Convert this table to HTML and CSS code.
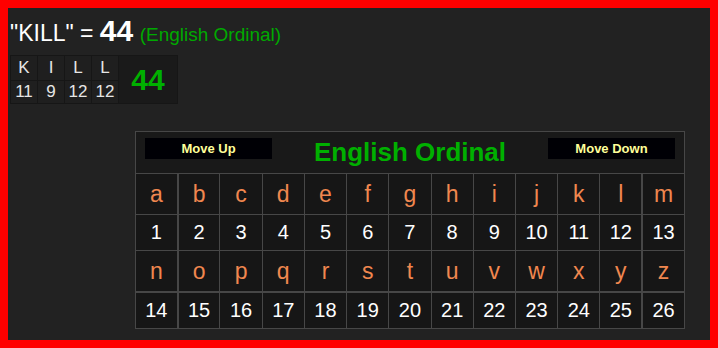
FILE: index.html
```html
<!doctype html>
<html lang="en">
  <head>
    <meta charset="UTF-8" />
    <meta name="viewport" content="width=device-width, initial-scale=1.0" />
    <title>KILL - English Ordinal</title>
    <link rel="stylesheet" href="styles.css">
  </head>
  <body>
    <div class="frame">
      <div class="result">
        "KILL" = <b class="total">44</b> <span class="cipher">(English Ordinal)</span>
      </div>

      <table class="breakdown">
        <tr>
          <td>K</td><td>I</td><td>L</td><td>L</td>
          <td class="sum" rowspan="2">44</td>
        </tr>
        <tr class="nums">
          <td>11</td><td>9</td><td>12</td><td>12</td>
        </tr>
      </table>

      <table class="chart">
        <tr class="head">
          <td colspan="13">
            <div class="head-row">
              <button class="move">Move Up</button>
              <span class="chart-title">English Ordinal</span>
              <button class="move">Move Down</button>
            </div>
          </td>
        </tr>
        <tr class="letters" id="row1"></tr>
        <tr class="values" id="row2"></tr>
        <tr class="letters" id="row3"></tr>
        <tr class="values" id="row4"></tr>
      </table>
    </div>

    <script>
      // fill the a-z chart, two rows of 13 letters
      var abc = "abcdefghijklmnopqrstuvwxyz";
      function fill(letterRow, valueRow, from) {
        var l = document.getElementById(letterRow);
        var v = document.getElementById(valueRow);
        for (var i = from; i < from + 13; i++) {
          var a = document.createElement("td");
          a.textContent = abc[i];
          var n = document.createElement("td");
          n.textContent = i + 1;
          if (i % 13 === 0) {
            a.className = n.className = "first";
          }
          if (i % 13 === 12) {
            a.className = n.className = "last";
          }
          l.appendChild(a);
          v.appendChild(n);
        }
      }
      fill("row1", "row2", 0);
      fill("row3", "row4", 13);
    </script>
  </body>
</html>
```

FILE: styles.css
```css
html,
body {
  margin: 0;
  padding: 0;
}

body {
  font-family: "Liberation Sans", Arial, sans-serif;
  color: #fff;
  background: #222;
}

.frame {
  box-sizing: border-box;
  height: 348px;
  border: 8px solid #ff0000;
  background: #222;
  padding: 0 2px;
  overflow: hidden;
}

.result {
  padding-top: 10px;
  height: 27px;
  font-size: 23px;
  line-height: 26px;
  white-space: nowrap;
}

.result .total {
  font-size: 30px;
}

.result .cipher {
  color: #00a900;
  font-size: 19px;
}

/* letter by letter breakdown */
.breakdown {
  margin-top: 10px;
  width: 168px;
  border-spacing: 1px;
  background: #161616;
  border-collapse: separate;
}

.breakdown td {
  background: #1f1f1f;
  color: #e6e6e6;
  font-size: 17px;
  text-align: center;
  width: 26px;
  height: 24px;
  padding: 0;
}

.breakdown .nums td {
  height: 22px;
}

.breakdown td.sum {
  background: #1a1a1a;
  color: #00b000;
  font-size: 30px;
  font-weight: bold;
  width: auto;
}

/* cipher chart */
.chart {
  margin: 27px 0 0 125px;
  width: 550px;
  border-collapse: collapse;
  background: #161616;
  table-layout: fixed;
}

.chart td {
  border: 1px solid #474747;
  text-align: center;
  padding: 0;
}

.chart .head td {
  background: #191919;
  height: 41px;
}

.head-row {
  display: flex;
  justify-content: space-between;
  align-items: center;
  padding: 0 9px;
}

.move {
  width: 127px;
  height: 21px;
  margin-bottom: 8px;
  background: #000005;
  color: #ffff99;
  border: none;
  font-family: "Liberation Sans", Arial, sans-serif;
  font-weight: bold;
  font-size: 13px;
  padding: 0;
}

.chart-title {
  color: #00b000;
  font-size: 26px;
  font-weight: bold;
}

.chart .letters td {
  color: #f0874f;
  font-size: 23px;
  height: 40px;
}

.chart .values td {
  color: #fff;
  font-size: 20px;
  height: 35px;
}

.chart td.first {
  border-right-width: 2px;
}

.chart td.last {
  border-left-width: 2px;
}

#row3 td {
  border-bottom-width: 2px;
}
```
